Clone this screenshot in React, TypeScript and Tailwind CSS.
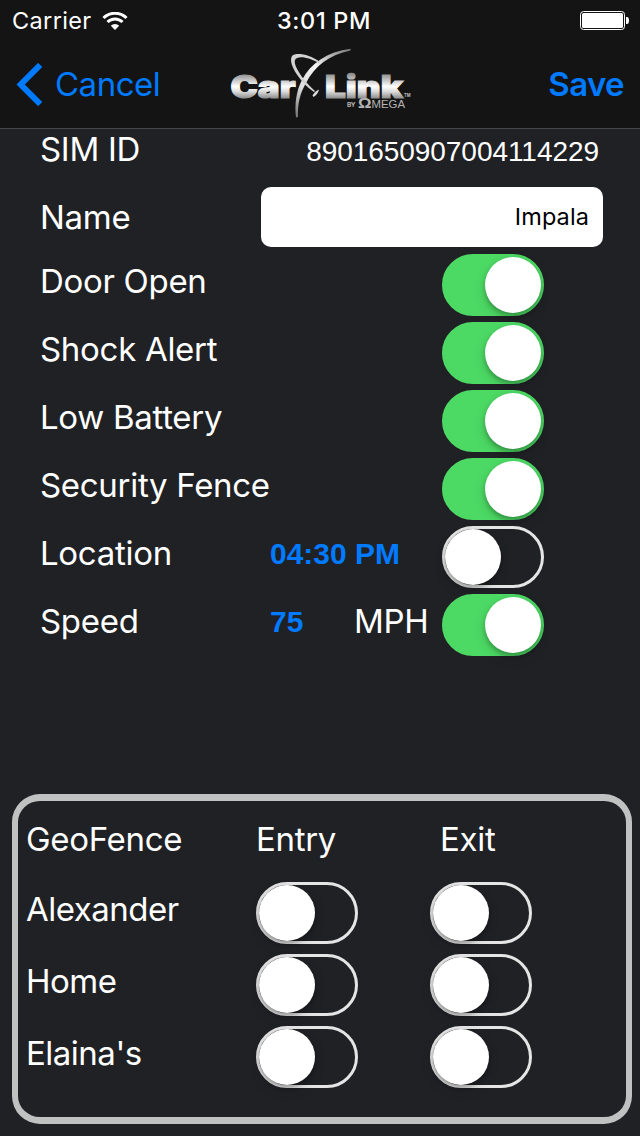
import { useState } from 'react';
import clsx from 'clsx';

const ALERTS = [
  { label: 'Door Open', on: true },
  { label: 'Shock Alert', on: true },
  { label: 'Low Battery', on: true },
  { label: 'Security Fence', on: true },
  { label: 'Location', on: false, value: '04:30 PM' },
  { label: 'Speed', on: true, value: '75', unit: 'MPH' },
];

const FENCES = ['Alexander', 'Home', "Elaina's"];

function Switch({ initial = false, label }: { initial?: boolean; label: string }) {
  const [on, setOn] = useState(initial);

  return (
    <button
      type="button"
      role="switch"
      aria-checked={on}
      aria-label={label}
      onClick={() => setOn(!on)}
      className={clsx(
        'flex h-[62px] w-[102px] shrink-0 items-center rounded-full border-[3px]',
        on ? 'justify-end border-[#4cd964] bg-[#4cd964]' : 'justify-start border-[#e5e5e5]',
      )}
    >
      <span className="size-14 rounded-full bg-white shadow-[0_3px_5px_rgba(0,0,0,0.28),0_5px_14px_rgba(0,0,0,0.1)]" />
    </button>
  );
}

function StatusBar() {
  return (
    <div className="grid h-10 grid-cols-3 items-center pt-px pr-[11px] pl-3">
      <div className="flex items-center gap-[11px]">
        <span className="text-[23.5px] font-[370] tracking-[0.35px]">Carrier</span>
        <svg width="26" height="18" viewBox="0 0 26 18" fill="none">
          <path d="M1.500 6A16.300 16.300 0 0 1 24.500 6" stroke="#fff" strokeWidth="3" />
          <path d="M5.500 10A10.700 10.700 0 0 1 20.500 10" stroke="#fff" strokeWidth="3" />
          <path d="M13 18 8.800 13.700A6.200 6.200 0 0 1 17.200 13.700Z" fill="#fff" />
        </svg>
      </div>
      <span className="pl-[7px] text-center text-[23.5px] font-medium tracking-[0.65px]">3:01 PM</span>
      <svg className="justify-self-end" width="49" height="19" viewBox="0 0 49 19">
        <rect x="0.5" y="0.5" width="44" height="18" rx="3" fill="none" stroke="#fff" />
        <rect x="2" y="2" width="41" height="15" rx="1.5" fill="#fff" />
        <path d="M46 6h1a2 3.500 0 0 1 0 7h-1Z" fill="#fff" />
      </svg>
    </div>
  );
}

function Logo() {
  return (
    <svg width="184" height="72" viewBox="228 48 184 72" aria-label="Car Link by Omega">
      <defs>
        <linearGradient id="chrome" gradientUnits="userSpaceOnUse" x1="0" y1="74" x2="0" y2="99">
          <stop offset="0" stopColor="#8e8e8e" />
          <stop offset="0.5" stopColor="#ffffff" />
          <stop offset="0.7" stopColor="#dcdcdc" />
          <stop offset="1" stopColor="#858585" />
        </linearGradient>
        <linearGradient id="arc" gradientUnits="userSpaceOnUse" x1="350" y1="49" x2="297" y2="117">
          <stop offset="0" stopColor="#777777" />
          <stop offset="0.4" stopColor="#f4f4f4" />
          <stop offset="0.7" stopColor="#dddddd" />
          <stop offset="1" stopColor="#777777" />
        </linearGradient>
      </defs>
      <g fill="url(#chrome)" stroke="url(#chrome)" strokeWidth="1.2" className="font-['Inter'] font-black">
        <text x="230.5" y="97.500" fontSize="31" textLength="65" lengthAdjust="spacingAndGlyphs">Car</text>
        <text x="325" y="97.500" fontSize="31" textLength="78" lengthAdjust="spacingAndGlyphs">Link</text>
      </g>
      <path
        d="M350.5 48.800C327 52 311 63 302 80C296 91 294.500 105 296 117.500L298 117C297.500 105 299.500 94 306 83C315 66 329 55 350.500 50.600Z"
        fill="url(#arc)"
      />
      <path
        d="M320 62C309 54 296 52 292 56C287 64 302 84 314 92L315 91C304 81 293 66 295 60C297 55 309 57 319 63Z"
        fill="#d2d2d2"
      />
      <path d="M312.500 95.500Q315 91 319 89.500Q318 94 313.500 97Z" fill="#dcdcdc" />
      <text x="404" y="97" fontSize="5" textLength="6.500" lengthAdjust="spacingAndGlyphs" fill="#bbb" className="font-['Inter'] font-bold">TM</text>
      <g fill="#b4b4b4">
        <text x="347" y="106.500" fontSize="6.500" textLength="8.500" className="font-['Inter'] font-bold">BY</text>
        <text x="358" y="108" fontSize="14" textLength="13.500" lengthAdjust="spacingAndGlyphs" className="font-['Liberation_Sans'] font-bold">Ω</text>
        <text x="371.500" y="108" fontSize="11.500" textLength="33.500" lengthAdjust="spacingAndGlyphs" className="font-['Liberation_Sans']">MEGA</text>
      </g>
    </svg>
  );
}

function NavBar() {
  return (
    <div className="grid h-[88px] grid-cols-[1fr_184px_1fr] items-center px-4">
      <button type="button" className="flex items-center gap-3 text-[#007aff]">
        <svg width="27" height="43" viewBox="0 0 27 43" fill="none">
          <path d="M24.200 2 4.700 21.500 24.200 41" stroke="currentColor" strokeWidth="6" />
        </svg>
        <span className="pt-0.5 text-[33px] font-[370] tracking-[-0.5px]">Cancel</span>
      </button>
      <Logo />
      <button type="button" className="justify-self-end pt-0.5 text-[33px] font-[600] tracking-[-0.6px] text-[#007aff]">
        Save
      </button>
    </div>
  );
}

export default function App() {
  return (
    <div className="flex h-[1136px] w-[640px] flex-col overflow-hidden bg-[#202125] font-['Inter',sans-serif] text-white">
      <header className="h-[129px] shrink-0 border-b border-[#46474a] bg-[#141414]">
        <StatusBar />
        <NavBar />
      </header>

      <main className="flex flex-col text-[33px] leading-10 font-[380] tracking-[-0.3px]">
        <div className="flex h-[52px] items-start justify-between pr-[41px] pl-10">
          <span>SIM ID</span>
          <span className="pt-[3px] font-['Liberation_Sans'] text-[28px] tracking-[-0.05px]">8901650907004114229</span>
        </div>
        <div className="flex h-[70px] items-center justify-between pt-0.5 pr-[37px] pl-10">
          <span>Name</span>
          <input
            defaultValue="Impala"
            className="h-[60px] w-[342px] rounded-[10px] bg-white px-[14px] pb-0.5 text-right text-[23.5px] tracking-[0.1px] text-black"
          />
        </div>

        {ALERTS.map(({ label, on, value, unit }) => (
          <div key={label} className="grid h-[68px] grid-cols-[230px_84px_88px_102px] items-center pl-10">
            <span className="pb-2 whitespace-nowrap">{label}</span>
            <span className="pb-1.5 font-['Liberation_Sans'] text-[30px] font-bold tracking-normal whitespace-nowrap text-[#007aff]">
              {value}
            </span>
            <span className="pb-2">{unit}</span>
            <Switch initial={on} label={label} />
          </div>
        ))}
      </main>

      <section className="mt-[135px] mr-2 ml-3 h-[330px] rounded-[28px] border-x-[6px] border-y-[7px] border-[#c0c1c1] text-[33px] leading-10 font-[380] tracking-[-0.3px]">
        <div className="grid h-[76px] grid-cols-[230px_184px_1fr] items-center pl-2">
          <span>GeoFence</span>
          <span>Entry</span>
          <span>Exit</span>
        </div>
        {FENCES.map((name) => (
          <div key={name} className="grid h-[72px] grid-cols-[230px_174px_1fr] items-center pl-2">
            <span className="pb-2 tracking-[-0.5px]">{name}</span>
            <Switch label={`${name} entry`} />
            <Switch label={`${name} exit`} />
          </div>
        ))}
      </section>
    </div>
  );
}
